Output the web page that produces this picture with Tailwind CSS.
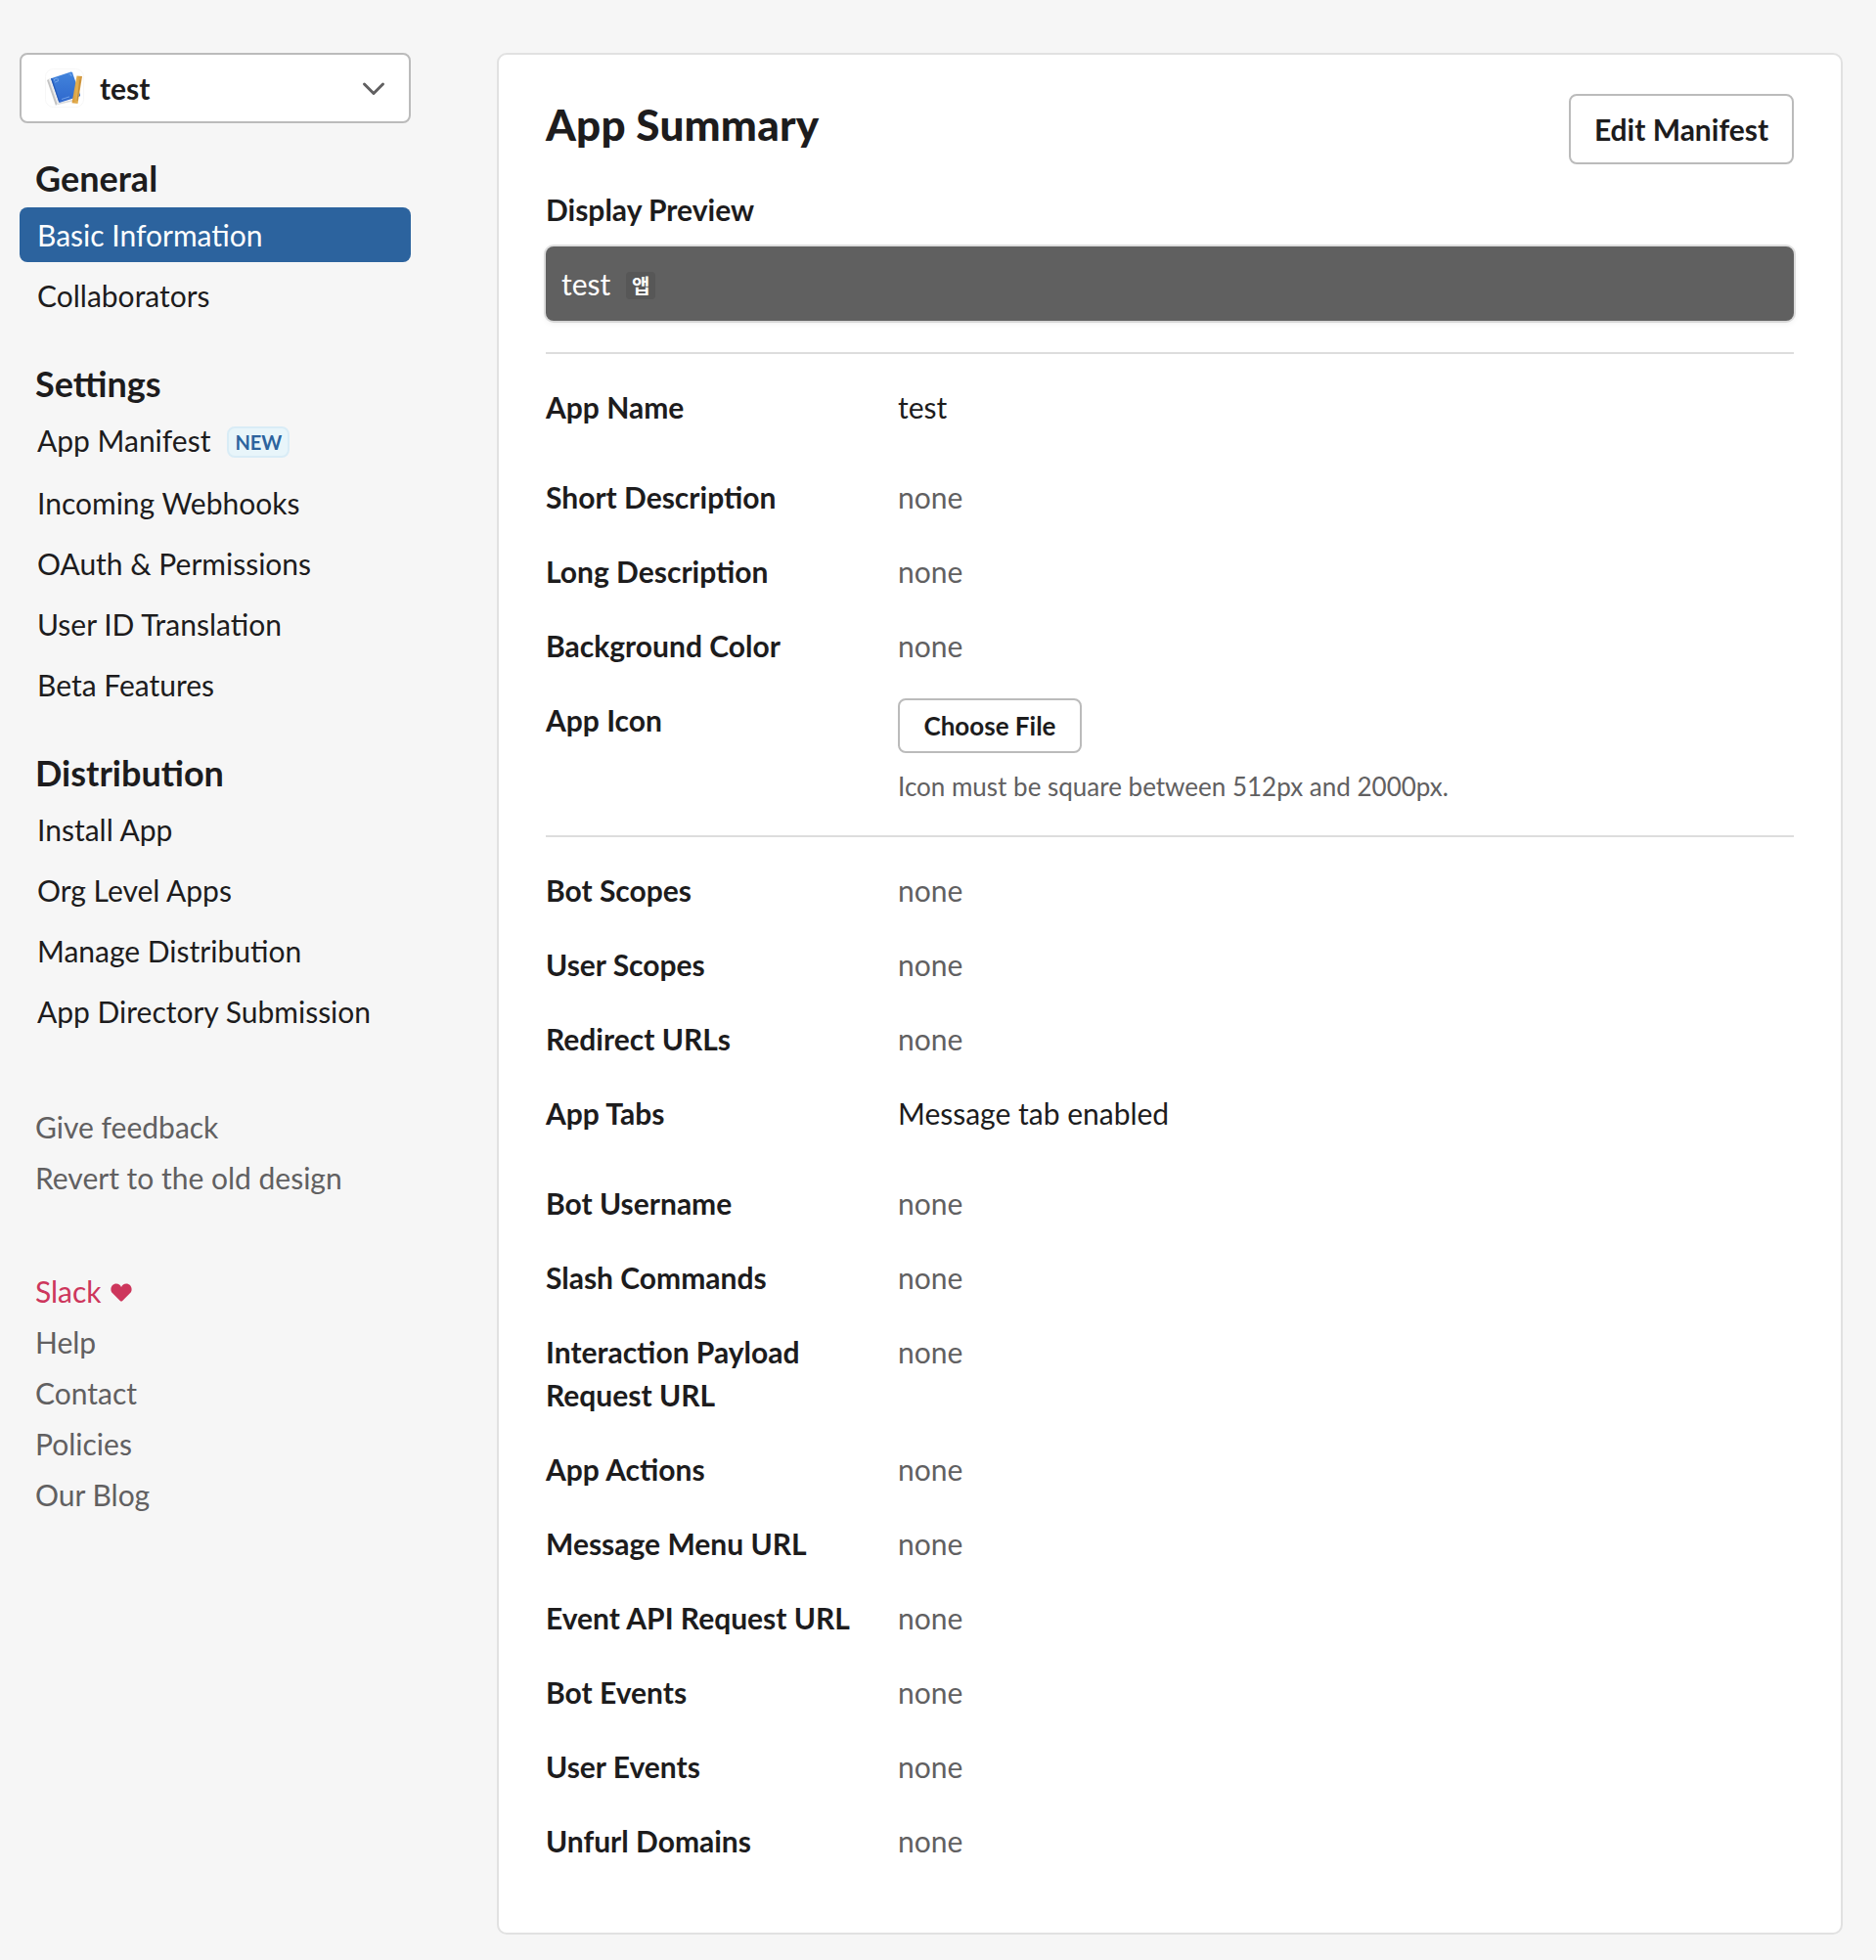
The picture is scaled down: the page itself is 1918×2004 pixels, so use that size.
<!DOCTYPE html>
<html lang="en">
<head>
<meta charset="utf-8">
<title>App Summary</title>
<script src="https://cdn.jsdelivr.net/npm/@tailwindcss/browser@4"></script>
</head>
<body class="flex min-h-screen items-start bg-[#f6f6f6] pt-[54px] pb-[26px] pl-5 font-['Lato','Noto_Sans_CJK_KR',sans-serif] text-[30px] leading-[44px] text-[#1d1c1d]">

<aside class="w-[400px] shrink-0">
  <button class="flex h-[72px] w-full items-center rounded-lg border-2 border-[#bbb] bg-white pr-[22px] pl-6 text-left font-bold">
    <svg class="size-10 shrink-0" viewBox="0 0 40 40">
      <defs>
        <linearGradient id="cover" x1="0" y1="0" x2="0" y2="1"><stop offset="0" stop-color="#4284dc"/><stop offset="1" stop-color="#2f68cd"/></linearGradient>
        <linearGradient id="ruler" x1="0" y1="0" x2="1" y2="0"><stop offset="0" stop-color="#d99a3a"/><stop offset=".5" stop-color="#e3b052"/><stop offset="1" stop-color="#cf9238"/></linearGradient>
      </defs>
      <rect x=".5" y=".5" width="39" height="39" rx="8" fill="#fff" stroke="#f7f7f7"/>
      <path d="M2 12 4.500 10.500 13.500 35 11 38Z" fill="#c4c4c4"/>
      <path d="M11 37.500 15 35 30 31.500 31 33Z" fill="#dadada"/>
      <path d="M3.500 10.800 6.500 10 15.500 34.500 12.500 36Z" fill="#ececec"/>
      <path d="M6 10.300 26.500 3.600Q27.500 3.300 28 4.300L36 27Q36.300 28 35.500 28.400L15.500 34.800Q14.500 35 14.200 34.200Z" fill="url(#cover)"/>
      <path d="M6 10.300 7.300 9.900 15.300 34.800 14.200 34.200Z" fill="#2458b5"/>
      <path d="M9.500 12.500v-1.500l3-1M24.500 6l1.800-.4 .8 2.400M10 14.200l3.500-1.400-.5-2.600M17 31.500l8-2.600" fill="none" stroke="#8db8f2" stroke-width=".7"/>
      <path d="M32.500 7.600 38 8 33.500 36 27.500 35.200Z" fill="url(#ruler)"/>
      <path d="M36 11.500 33 33" stroke="#b97e2c" stroke-width=".7"/>
    </svg>
    <span class="ml-4 flex-1">test</span>
    <svg class="mt-0.5 h-[18px] w-7 shrink-0" viewBox="0 0 28 18" fill="none" stroke="#616061" stroke-width="3" stroke-linecap="round" stroke-linejoin="round"><path d="M4.500 4 14 13.500 23.500 4"/></svg>
  </button>

  <nav class="mt-[34px] flex flex-col gap-10">
    <section>
      <h2 class="mb-2 pl-4 text-[36px] font-bold">General</h2>
      <ul class="flex flex-col gap-1.5">
        <li class="rounded-lg bg-[#2c639e] px-[18px] py-1.5 text-white">Basic Information</li>
        <li class="px-[18px] py-1.5">Collaborators</li>
      </ul>
    </section>
    <section>
      <h2 class="mb-2 pl-4 text-[36px] font-bold">Settings</h2>
      <ul class="flex flex-col gap-1.5">
        <li class="flex h-[58px] items-start gap-[17px] px-[18px] py-1.5">App Manifest
          <span class="mt-2 flex h-8 w-16 items-center justify-center rounded-lg border-2 border-[#d9ecf6] bg-[#e8f5fa] text-[20px] leading-7 font-bold text-[#2c639e]">NEW</span>
        </li>
        <li class="px-[18px] py-1.5">Incoming Webhooks</li>
        <li class="px-[18px] py-1.5">OAuth &amp; Permissions</li>
        <li class="px-[18px] py-1.5">User ID Translation</li>
        <li class="px-[18px] py-1.5">Beta Features</li>
      </ul>
    </section>
    <section>
      <h2 class="mb-2 pl-4 text-[36px] font-bold">Distribution</h2>
      <ul class="flex flex-col gap-1.5">
        <li class="px-[18px] py-1.5">Install App</li>
        <li class="px-[18px] py-1.5">Org Level Apps</li>
        <li class="px-[18px] py-1.5">Manage Distribution</li>
        <li class="px-[18px] py-1.5">App Directory Submission</li>
      </ul>
    </section>
  </nav>

  <ul class="mt-16 pl-4 leading-[52px] text-[#616061]">
    <li>Give feedback</li>
    <li>Revert to the old design</li>
  </ul>
  <ul class="mt-16 pl-4 leading-[52px] text-[#616061]">
    <li class="flex items-center text-[#cd365c]">Slack
      <svg class="mt-[3px] ml-[9px] h-[19px] w-[22px]" viewBox="0 0 22 19" fill="currentColor"><path d="M11 18.600Q10.400 18.600 9.800 18L2.100 10.300C.9 9.100.4 7.800.4 6.200.4 3 2.900.6 5.900.6 8.300.6 10.100 2 11 4 11.900 2 13.700.6 16.100.6 19.100.6 21.600 3 21.600 6.200 21.600 7.800 21.100 9.100 19.900 10.300L12.200 18Q11.600 18.600 11 18.600Z"/></svg>
    </li>
    <li>Help</li>
    <li>Contact</li>
    <li>Policies</li>
    <li>Our Blog</li>
  </ul>
</aside>

<main class="ml-[88px] w-[1376px] rounded-[10px] border-2 border-[#e1e1e1] bg-white px-12 pt-10 pb-10">
  <header class="flex h-[72px] items-start justify-between">
    <h1 class="mt-px text-[44px] leading-[60px] font-black tracking-[0.2px]">App Summary</h1>
    <button class="flex h-[72px] w-[230px] items-center justify-center rounded-lg border-2 border-[#bbb] font-bold">Edit Manifest</button>
  </header>

  <h3 class="mt-6 font-bold">Display Preview</h3>
  <div class="mt-4 flex h-[76px] items-center rounded-lg bg-[#606060] px-4 text-white shadow-[0_0_0_2px_rgba(29,28,29,0.13),0_2px_6px_rgba(0,0,0,0.08)]">
    <span>test</span>
    <span class="mt-1 ml-4 flex h-7 w-[30px] items-center justify-center rounded-[4px] bg-[#575757] text-[20px] leading-7 font-bold">앱</span>
  </div>

  <dl class="mt-8 border-t-2 border-[#ddd] pt-8">
    <div class="mb-12 flex"><dt class="w-[328px] font-bold">App Name</dt><dd class="ml-8">test</dd></div>
    <div class="mb-8 flex"><dt class="w-[328px] font-bold">Short Description</dt><dd class="ml-8 text-[#616061]">none</dd></div>
    <div class="mb-8 flex"><dt class="w-[328px] font-bold">Long Description</dt><dd class="ml-8 text-[#616061]">none</dd></div>
    <div class="mb-8 flex"><dt class="w-[328px] font-bold">Background Color</dt><dd class="ml-8 text-[#616061]">none</dd></div>
    <div class="flex">
      <dt class="w-[328px] font-bold">App Icon</dt>
      <dd class="ml-8 text-[26px]">
        <button class="flex h-14 w-[188px] items-center justify-center rounded-lg border-2 border-[#bbb] font-bold">Choose File</button>
        <p class="mt-3.5 leading-10 text-[#616061]">Icon must be square between 512px and 2000px.</p>
      </dd>
    </div>
  </dl>

  <dl class="mt-[30px] border-t-2 border-[#ddd] pt-8">
    <div class="mb-8 flex"><dt class="w-[328px] font-bold">Bot Scopes</dt><dd class="ml-8 text-[#616061]">none</dd></div>
    <div class="mb-8 flex"><dt class="w-[328px] font-bold">User Scopes</dt><dd class="ml-8 text-[#616061]">none</dd></div>
    <div class="mb-8 flex"><dt class="w-[328px] font-bold">Redirect URLs</dt><dd class="ml-8 text-[#616061]">none</dd></div>
    <div class="mb-12 flex"><dt class="w-[328px] font-bold">App Tabs</dt><dd class="ml-8">Message tab enabled</dd></div>
    <div class="mb-8 flex"><dt class="w-[328px] font-bold">Bot Username</dt><dd class="ml-8 text-[#616061]">none</dd></div>
    <div class="mb-8 flex"><dt class="w-[328px] font-bold">Slash Commands</dt><dd class="ml-8 text-[#616061]">none</dd></div>
    <div class="mb-8 flex"><dt class="w-[328px] font-bold">Interaction Payload Request URL</dt><dd class="ml-8 text-[#616061]">none</dd></div>
    <div class="mb-8 flex"><dt class="w-[328px] font-bold">App Actions</dt><dd class="ml-8 text-[#616061]">none</dd></div>
    <div class="mb-8 flex"><dt class="w-[328px] font-bold">Message Menu URL</dt><dd class="ml-8 text-[#616061]">none</dd></div>
    <div class="mb-8 flex"><dt class="w-[328px] font-bold">Event API Request URL</dt><dd class="ml-8 text-[#616061]">none</dd></div>
    <div class="mb-8 flex"><dt class="w-[328px] font-bold">Bot Events</dt><dd class="ml-8 text-[#616061]">none</dd></div>
    <div class="mb-8 flex"><dt class="w-[328px] font-bold">User Events</dt><dd class="ml-8 text-[#616061]">none</dd></div>
    <div class="mb-8 flex"><dt class="w-[328px] font-bold">Unfurl Domains</dt><dd class="ml-8 text-[#616061]">none</dd></div>
  </dl>
</main>
</body>
</html>
